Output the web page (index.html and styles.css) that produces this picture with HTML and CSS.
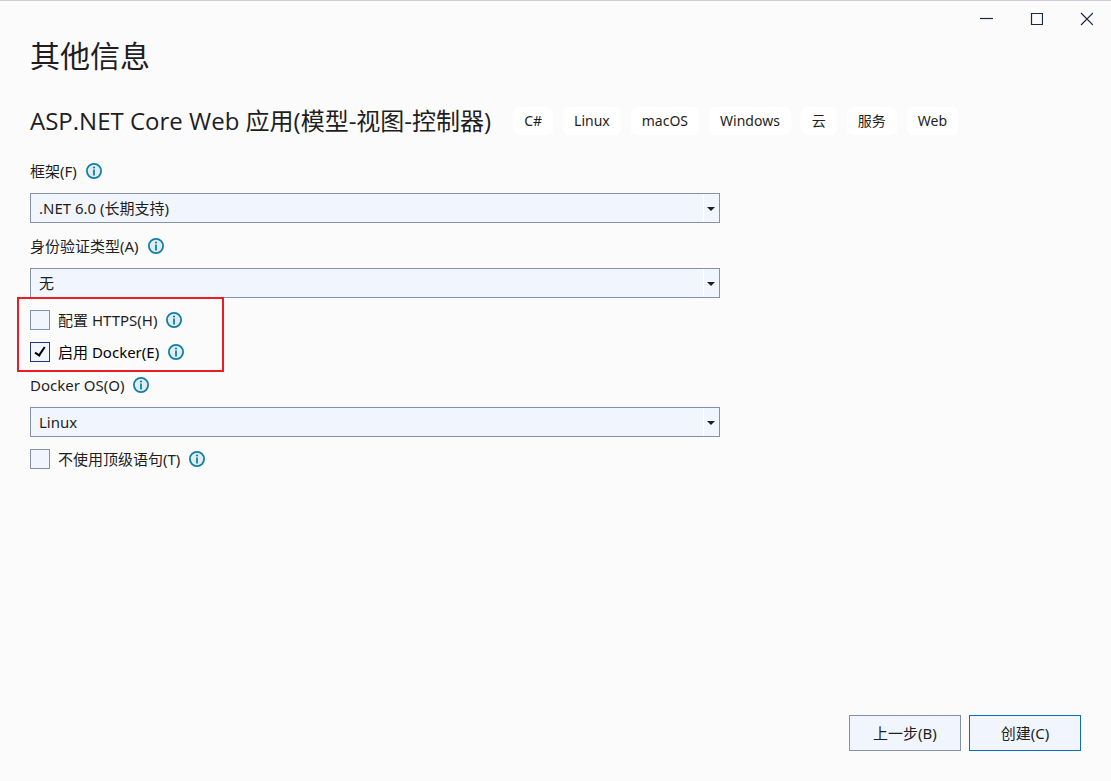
FILE: index.html
```html
<!DOCTYPE html>
<html lang="zh-CN">
<head>
  <meta charset="UTF-8" />
  <meta name="viewport" content="width=device-width, initial-scale=1.0"/>
  <title>其他信息</title>
  <link rel="stylesheet" href="styles.css">
</head>
<body>

  <svg width="0" height="0" class="sprite" aria-hidden="true">
    <symbol id="info" viewBox="0 0 16 16">
      <circle cx="8" cy="8" r="7.1" fill="#dfedf1" stroke="#117fa5" stroke-width="1.8"/>
      <path d="M8 6.5v6" stroke="#117fa5" stroke-width="1.8"/>
      <circle cx="8" cy="4.5" r="1.1" fill="#117fa5"/>
    </symbol>
  </svg>

  <header class="titlebar">
    <button type="button" class="win-btn" aria-label="最小化">
      <svg width="14" height="14" viewBox="0 0 14 14"><path d="M1 6.5h13"/></svg>
    </button>
    <button type="button" class="win-btn" aria-label="最大化">
      <svg width="14" height="14" viewBox="0 0 14 14"><path d="M2.5 1.5h11v11h-11z"/></svg>
    </button>
    <button type="button" class="win-btn" aria-label="关闭">
      <svg width="14" height="14" viewBox="0 0 14 14"><path d="M2 1l12 12M14 1L2 13"/></svg>
    </button>
  </header>

  <main>
    <h1>其他信息</h1>

    <div class="project">
      <h2>ASP.NET Core Web 应用(模型-视图-控制器)</h2>
      <ul class="tags">
        <li>C#</li>
        <li>Linux</li>
        <li>macOS</li>
        <li>Windows</li>
        <li>云</li>
        <li>服务</li>
        <li>Web</li>
      </ul>
    </div>

    <form id="options" class="options">
      <div class="label-row">
        <label for="framework">框架(F)</label>
        <svg class="info"><use href="#info"/></svg>
      </div>
      <div class="select">
        <select id="framework">
          <option>.NET 6.0 (长期支持)</option>
        </select>
      </div>

      <div class="label-row">
        <label for="auth">身份验证类型(A)</label>
        <svg class="info"><use href="#info"/></svg>
      </div>
      <div class="select">
        <select id="auth">
          <option>无</option>
        </select>
      </div>

      <div class="highlight">
        <div class="check-row">
          <input type="checkbox" id="https">
          <label for="https">配置 HTTPS(H)</label>
          <svg class="info"><use href="#info"/></svg>
        </div>
        <div class="check-row active">
          <input type="checkbox" id="docker" checked>
          <label for="docker">启用 Docker(E)</label>
          <svg class="info"><use href="#info"/></svg>
        </div>
      </div>

      <div class="label-row">
        <label for="docker-os">Docker OS(O)</label>
        <svg class="info"><use href="#info"/></svg>
      </div>
      <div class="select">
        <select id="docker-os">
          <option>Linux</option>
          <option>Windows</option>
        </select>
      </div>

      <div class="check-row">
        <input type="checkbox" id="top-level">
        <label for="top-level">不使用顶级语句(T)</label>
        <svg class="info"><use href="#info"/></svg>
      </div>
    </form>
  </main>

  <footer>
    <button type="button" class="btn">上一步(B)</button>
    <button type="submit" form="options" class="btn primary">创建(C)</button>
  </footer>

</body>
</html>
```
FILE: styles.css
```css
*,
*::before,
*::after {
  box-sizing: border-box;
}

body {
  margin: 0;
  min-height: 100vh;
  display: flex;
  flex-direction: column;
  border-top: 1px solid #cccedb;
  background: #fbfbfb;
  color: #1e1e1e;
  font: 15px/20px "Noto Sans", "Noto Sans CJK SC", sans-serif;
}

.sprite {
  position: absolute;
}

.titlebar {
  display: flex;
  justify-content: flex-end;
  height: 36px;
}

.win-btn {
  width: 50px;
  padding: 0;
  border: 0;
  background: none;
  display: flex;
  align-items: center;
  justify-content: center;
}

.win-btn svg {
  fill: none;
  stroke: #1b293e;
  stroke-width: 1.2;
}

main {
  flex: 1;
  padding: 0 30px;
}

h1 {
  margin: 0;
  font-size: 30px;
  line-height: 38px;
  font-weight: 400;
}

.project {
  display: flex;
  flex-wrap: wrap;
  align-items: center;
  gap: 22px;
  margin: 30px 0 23px;
}

h2 {
  margin: 0;
  font-family: "Open Sans", "Noto Sans CJK SC", sans-serif;
  font-size: 24px;
  line-height: 32px;
  font-weight: 400;
}

.tags {
  display: flex;
  flex-wrap: wrap;
  gap: 10px;
  margin: 0;
  padding: 0;
  list-style: none;
}

.tags li {
  padding: 4px 11px;
  border-radius: 6px;
  background: #fff;
  font-size: 14px;
}

.options {
  display: flex;
  flex-direction: column;
  gap: 12px;
  max-width: 690px;
}

.label-row,
.check-row {
  display: flex;
  align-items: center;
  gap: 8px;
}

.label-row {
  height: 21px;
}

.check-row {
  height: 20px;
}

.active {
  color: #000;
}

.info {
  width: 16px;
  height: 16px;
  margin-left: 1px;
}

.select {
  position: relative;
}

.select select {
  display: block;
  appearance: none;
  width: 100%;
  height: 30px;
  padding: 0 24px 0 8px;
  border: 1px solid #8591a8;
  border-radius: 0;
  background: #f1f5fd;
  color: inherit;
  font: inherit;
}

/* strip with the drop-down arrow */
.select::before {
  content: "";
  position: absolute;
  top: 1px;
  bottom: 1px;
  right: 16px;
  width: 1px;
  background: #fff;
  pointer-events: none;
}

.select::after {
  content: "";
  position: absolute;
  top: 14px;
  right: 5px;
  border: 4px solid transparent;
  border-top-color: #1e1e1e;
  border-bottom: 0;
  pointer-events: none;
}

.check-row input {
  appearance: none;
  width: 20px;
  height: 20px;
  margin: 0;
  border: 1px solid #8591a8;
  background: #f1f5fd;
}

.check-row input:checked {
  position: relative;
  border-color: #1f3a78;
}

.check-row input:checked::after {
  content: "";
  position: absolute;
  left: 6px;
  top: 2px;
  width: 6px;
  height: 11px;
  border: solid #000;
  border-width: 0 2px 2px 0;
  transform: rotate(34deg);
}

.highlight {
  position: relative;
  display: flex;
  flex-direction: column;
  gap: 12px;
  align-self: flex-start;
}

.highlight::after {
  content: "";
  position: absolute;
  top: -13px;
  bottom: -10px;
  left: -13px;
  width: 207px;
  border: 2px solid #ec1c24;
  pointer-events: none;
}

footer {
  display: flex;
  justify-content: flex-end;
  gap: 8px;
  padding: 30px;
}

.btn {
  width: 112px;
  height: 36px;
  padding: 0;
  border: 1px solid #8591a8;
  background: #f1f5fd;
  color: inherit;
  font: inherit;
}

.btn.primary {
  border-color: #0b70b7;
}
```
